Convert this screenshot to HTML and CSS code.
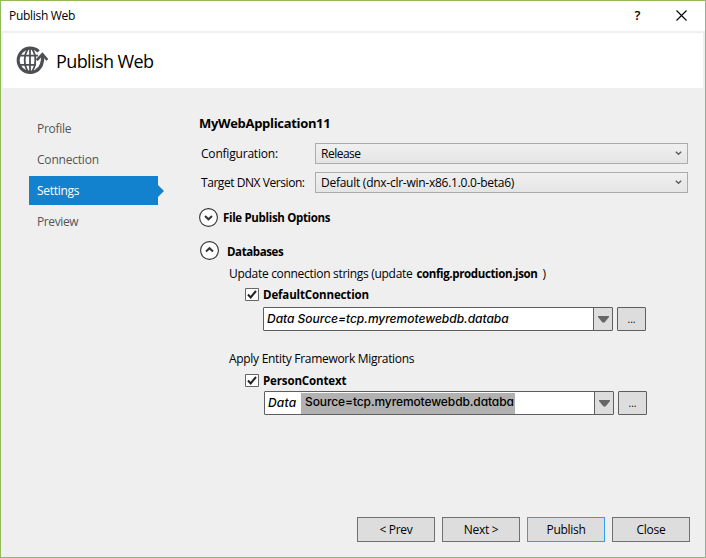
FILE: index.html
```html
<!DOCTYPE html>
<html lang="en">
<head>
<meta charset="utf-8">
<title>Publish Web</title>
<link rel="stylesheet" href="styles.css">
</head>
<body>
<div class="window">
  <div class="titlebar">
    <span class="caption">Publish Web</span>
    <span class="help">?</span>
    <svg class="close" width="11" height="11" viewBox="0 0 11 11"><path d="M.5.5l10 10M10.5.5l-10 10" stroke="#000" stroke-width="1.1"/></svg>
  </div>
  <header class="banner">
    <svg class="globe" width="32" height="30" viewBox="0 0 32 30" fill="none" stroke="#4d4f52">
      <path d="M22.7 5.4A12.2 12.2 0 1 0 22.7 23.2" stroke-width="3"/>
      <path d="M3 9.7h19M3 18.8h17M14 2v25" stroke-width="1.8"/>
      <path d="M12.3 2.5C7.5 9 7.5 19.500 12.300 26M15.700 2.500C18.500 6 19.500 10.500 19.300 14.500C19.200 19 18 23 15.700 26" stroke-width="1.8"/>
      <path d="M20.500 24.500C25 22 27 17 26.700 9.500" stroke-width="3.300"/>
      <path d="M20.800 14.200L26.400 8.200L31.300 14" stroke-width="2.600"/>
    </svg>
    <h1>Publish Web</h1>
  </header>
  <div class="content">
    <nav>
      <a>Profile</a>
      <a class="n2">Connection</a>
      <a class="current">Settings</a>
      <a class="n4">Preview</a>
    </nav>
    <main>
      <h2>MyWebApplication11</h2>
      <div class="field"><label class="l1">Configuration:</label><div class="select s1"><span>Release</span><svg width="7" height="5" viewBox="0 0 7 5"><path d="M.8.8l2.700 2.500L6.200.8" fill="none" stroke="#606060" stroke-width="1.500"/></svg></div></div>
      <div class="field"><label class="l2">Target DNX Version:</label><div class="select"><span>Default (dnx-clr-win-x86.1.0.0-beta6)</span><svg width="7" height="5" viewBox="0 0 7 5"><path d="M.8.8l2.700 2.500L6.200.8" fill="none" stroke="#606060" stroke-width="1.500"/></svg></div></div>
      <div class="expander files">
        <svg width="19" height="19" viewBox="0 0 19 19" fill="none" stroke="#333"><circle cx="9.500" cy="9.500" r="8.900" fill="#fff" stroke-width="1.100"/><path d="M6 8l3.500 3.300L13 8" stroke-width="2"/></svg>
        <b>File Publish Options</b>
      </div>
      <div class="expander dbs">
        <svg width="19" height="19" viewBox="0 0 19 19" fill="none" stroke="#333"><circle cx="9.500" cy="9.500" r="8.900" fill="#fff" stroke-width="1.100"/><path d="M6 10.500l3.500-3.300L13 10.500" stroke-width="2"/></svg>
        <b>Databases</b>
      </div>
      <p class="note update"><span>Update connection strings (update</span><b>config.production.json</b><span>)</span></p>
      <div class="check"><svg width="14" height="13" viewBox="0 0 14 13"><path d="M.5.5h13v12H.5z" fill="#fff" stroke="#666"/><path d="M3 6.500l2.700 3L11 3" fill="none" stroke="#222" stroke-width="2"/></svg><b>DefaultConnection</b></div>
      <div class="picker">
        <div class="combo"><span class="value"><i class="full">Data Source=tcp.myremotewebdb.databa</i></span><span class="drop"><svg width="11" height="7" viewBox="0 0 11 7"><path d="M0 0h11v1L6.500 6.500h-2L0 1z" fill="#666"/></svg></span></div>
        <button class="more">...</button>
      </div>
      <p class="note apply">Apply Entity Framework Migrations</p>
      <div class="check"><svg width="14" height="13" viewBox="0 0 14 13"><path d="M.5.5h13v12H.5z" fill="#fff" stroke="#666"/><path d="M3 6.500l2.700 3L11 3" fill="none" stroke="#222" stroke-width="2"/></svg><b class="person">PersonContext</b></div>
      <div class="picker second">
        <div class="combo"><span class="value"><i class="word">Data</i><mark>Source=tcp.myremotewebdb.databa</mark></span><span class="drop"><svg width="11" height="7" viewBox="0 0 11 7"><path d="M0 0h11v1L6.500 6.500h-2L0 1z" fill="#666"/></svg></span></div>
        <button class="more">...</button>
      </div>
    </main>
  </div>
  <footer>
    <button>&lt; Prev</button>
    <button>Next &gt;</button>
    <button class="primary">Publish</button>
    <button>Close</button>
  </footer>
</div>
</body>
</html>
```
FILE: styles.css
```css
* { box-sizing: border-box; }
body { margin: 0; background: #efefef; color: #000; font: 12px/16px "Open Sans", sans-serif; letter-spacing: -.3px; }
svg { display: block; flex: none; }
h1, h2, p { margin: 0; }
b { font-size: 11.5px; font-weight: 700; letter-spacing: -.33px; white-space: nowrap; }
.window { width: 706px; height: 558px; border: 1px solid #92b95b; display: flex; flex-direction: column; }
.titlebar { height: 30px; flex: none; background: #fff; display: flex; align-items: center; padding: 0 18px 0 8px; }
.caption { flex: 1; }
.help { font-weight: 600; font-size: 13px; margin: -2px 36px 0 0; }
.close { margin-top: -1px; }
.banner { height: 55px; flex: none; margin: 2px 2px 0 2px; background: #fff; display: flex; align-items: center; padding-left: 13px; }
.globe { margin-top: 1px; }
h1 { font-size: 18px; line-height: 26px; font-weight: 400; letter-spacing: -.6px; margin: 0 0 0 8px; }
.content { display: flex; flex: 1; }
nav { width: 129px; margin: 26px 0 0 28px; display: flex; flex-direction: column; gap: 2px; }
nav a { height: 29px; line-height: 29px; padding-left: 8px; color: #555; }
nav .n2 { letter-spacing: -.2px; }
nav .n4 { letter-spacing: -.4px; }
nav .current { background: #1382ce; color: #fff; display: flex; }
nav .current::after { content: ""; align-self: center; margin: 0 -6px 0 auto; border: 6px solid transparent; border-left-color: #1382ce; border-right: 0; }
main { margin-left: 41px; width: 489px; }
h2 { font-size: 13px; line-height: 18px; letter-spacing: -.32px; margin: 26px 0 11px; }
.field { display: flex; height: 21px; margin-bottom: 8px; align-items: center; }
.field label { width: 116px; padding: 1px 0 0 2px; }
.l1 { letter-spacing: -.2px; }
.l2 { letter-spacing: -.44px; }
.select { width: 373px; height: 21px; border: 1px solid #acacac; background: linear-gradient(#f0f0f0, #e5e5e5); display: flex; align-items: center; justify-content: space-between; padding: 0 5px; letter-spacing: -.26px; flex: none; }
.select svg { margin-top: -1px; }
.s1 { letter-spacing: -.5px; }
.expander { display: flex; align-items: center; height: 19px; }
.files { margin-top: 15px; gap: 5px; }
.dbs { margin: 14px 0 0 1px; gap: 8px; }
.dbs b { letter-spacing: -.4px; margin-top: 3px; }
.note { margin-left: 30px; }
.update { margin-top: 5px; display: flex; }
.update b { letter-spacing: -.36px; margin: 0 5px 0 4px; }
.update > span { margin-top: 1px; margin-bottom: -1px; }
.update > b { margin-top: 1px; margin-bottom: -1px; }
.check { display: flex; align-items: center; height: 14px; margin: 6px 0 0 46px; gap: 4px; }
.check b { letter-spacing: -.13px; margin-top: 2px; }
.picker { display: flex; margin: 6px 0 0 64px; gap: 4px; }
.second { margin: 4px 0 0 65px; }
.combo { width: 350px; height: 24px; border: 1px solid #5f5f61; border-radius: 1px; background: #fff; display: flex; }
.value { flex: 1; display: flex; align-items: center; padding-left: 3px; font: 500 12px/16px Inter, "Open Sans", sans-serif; font-feature-settings: "cv11"; letter-spacing: 0; white-space: nowrap; }
.full { letter-spacing: -.02px; }
.word { width: 33px; letter-spacing: .2px; }
mark { background: #b1b1b1; color: #000; height: 21px; line-height: 17px; width: 214px; padding-left: 4px; letter-spacing: -.1px; }
.drop { width: 19px; background: #ddd; border-left: 1px solid #5f5f61; display: flex; align-items: center; justify-content: center; padding-top: 1px; }
button { font: inherit; letter-spacing: inherit; color: #000; padding: 0; width: 78px; height: 25px; border: 1px solid #707070; background: #ddd; }
.more { width: 29px; height: 24px; border-color: #5f5f61; border-radius: 1px; padding-top: 0; font-size: 10px; letter-spacing: 0; }
.apply { margin-top: 20px; }
footer { display: flex; justify-content: flex-end; gap: 7px; padding: 0 15px 15px 0; }
.primary { border-color: #3399ff; }
```
